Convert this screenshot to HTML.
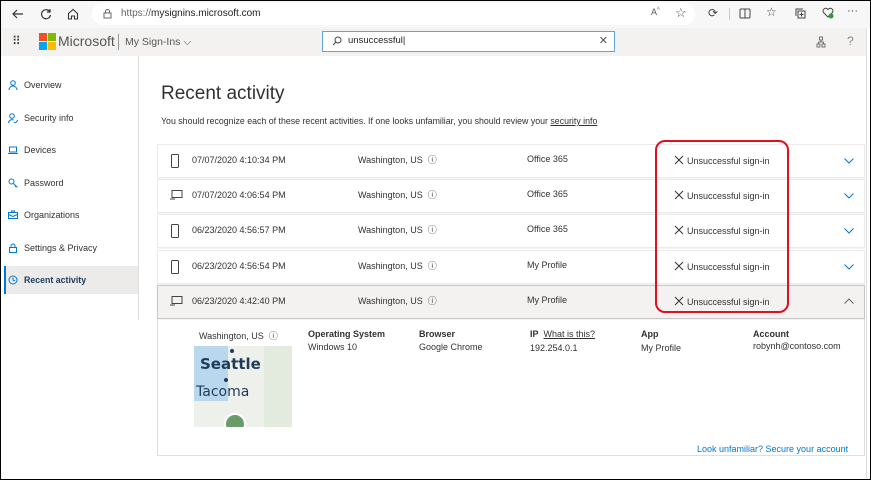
<!DOCTYPE html>
<html><head><meta charset="utf-8"><style>
*{box-sizing:border-box;margin:0;padding:0}
body{width:871px;height:480px;overflow:hidden;font-family:"Liberation Sans",sans-serif;background:#fff;position:relative;color:#323130}
.frame{position:absolute;inset:0;border:1px solid #000;z-index:50;pointer-events:none}
.tb{position:absolute;left:0;top:0;width:871px;height:28px;background:#f7f7f7}
.addr{position:absolute;left:92px;top:3px;width:603px;height:22px;border-radius:11px;background:#fff;font-size:10px;line-height:22px;padding-left:29px;color:#666}
.addr b{font-weight:normal;color:#222}
.hdr{position:absolute;left:0;top:28px;width:866px;height:28px;background:#f3f2f1}
.side{position:absolute;left:0;top:56px;width:139px;height:264px;border-right:1px solid #e1dfdd}
.nav{position:absolute;left:8px;font-size:9px;color:#323130;display:flex;align-items:center;gap:6px}
.nav svg{width:10px;height:10px}
.sel{position:absolute;left:4px;top:266px;width:134px;height:28px;background:#edebe9;border-left:2px solid #0078d4}
.row{position:absolute;left:157px;width:708px;height:34px;border:1px solid #edebe9;font-size:9px;line-height:11px;color:#323130;box-shadow:0 1px 1px rgba(0,0,0,.05)}
.row>span{position:absolute;top:10px}
.row .i{position:absolute;left:12px;top:9px}
.row .x{display:inline-block;width:10px;height:10px;vertical-align:-1px;margin-right:3px}
.ex{position:absolute;left:157px;top:319px;width:708px;height:137px;border:1px solid #e1dfdd;border-top:none;font-size:9px}
.ex div{position:absolute}
</style></head><body>
<div class="tb">
<svg style="position:absolute;left:12px;top:8px" width="12" height="12" viewBox="0 0 12 12" fill="none" stroke="#333" stroke-width="1.2"><path d="M11 6H1M5 2L1 6l4 4"/></svg>
<svg style="position:absolute;left:40px;top:8px" width="12" height="12" viewBox="0 0 12 12" fill="none" stroke="#333" stroke-width="1.2"><path d="M10 4A4.5 4.5 0 1 0 10.5 7M10 1v3H7"/></svg>
<svg style="position:absolute;left:67px;top:8px" width="12" height="12" viewBox="0 0 12 12" fill="none" stroke="#333" stroke-width="1.1"><path d="M1.5 5.5L6 1.5l4.5 4V11h-3V8h-3v3h-3z"/></svg>
<div class="addr">https://<b>mysignins.microsoft.com</b></div>
<svg style="position:absolute;left:103px;top:9px" width="9" height="10" viewBox="0 0 9 10" fill="none" stroke="#666"><rect x="1" y="4" width="7" height="5"/><path d="M2.5 4V2.5a2 2 0 0 1 4 0V4"/></svg>
<span style="position:absolute;left:651px;top:7px;font-size:9px;color:#555">A<sup style="font-size:6px">ᴬ</sup></span>
<span style="position:absolute;left:675px;top:5px;font-size:13px;color:#555">☆</span>
<span style="position:absolute;left:708px;top:6px;font-size:12px;color:#444">⟳</span>
<div style="position:absolute;left:729px;top:8px;width:1px;height:12px;background:#ccc"></div>
<svg style="position:absolute;left:739px;top:8px" width="12" height="11" viewBox="0 0 12 11" fill="none" stroke="#444"><rect x="1" y="1" width="10" height="9" rx="1"/><path d="M6 1v9"/></svg>
<span style="position:absolute;left:766px;top:5px;font-size:12px;color:#444">☆</span>
<svg style="position:absolute;left:795px;top:8px" width="11" height="11" viewBox="0 0 11 11" fill="none" stroke="#444"><rect x="3" y="3" width="7" height="7"/><path d="M1 8V1h7M6.5 4.5v4M4.5 6.5h4"/></svg>
<svg style="position:absolute;left:822px;top:7px" width="12" height="12" viewBox="0 0 12 12"><path d="M6 10L1.5 5.5a2.5 2.5 0 0 1 4.5-3 2.5 2.5 0 0 1 4.5 3z" fill="none" stroke="#444"/><circle cx="9" cy="9" r="2.5" fill="#2a9d3a"/></svg>
<span style="position:absolute;left:847px;top:5px;font-size:11px;color:#444">···</span>
</div>
<div class="hdr">
<span style="position:absolute;left:12px;top:6px;font-size:12px;color:#333;letter-spacing:-1px">⠿</span>
<svg style="position:absolute;left:39px;top:5px" width="17" height="17"><rect width="8" height="8" fill="#f25022"/><rect x="9" width="8" height="8" fill="#7fba00"/><rect y="9" width="8" height="8" fill="#00a4ef"/><rect x="9" y="9" width="8" height="8" fill="#ffb900"/></svg>
<span style="position:absolute;left:58px;top:5px;font-size:14px;color:#555">Microsoft</span>
<div style="position:absolute;left:118px;top:6px;width:1px;height:16px;background:#999"></div>
<span style="position:absolute;left:125px;top:8px;font-size:10.5px;color:#555">My Sign-Ins ⌵</span>
<div style="position:absolute;left:322px;top:3px;width:293px;height:21px;border:1.5px solid #5ea5e0;background:#fff;font-size:9.5px;line-height:18px;padding-left:25px;color:#222">unsuccessful|
<svg style="position:absolute;left:9px;top:4px" width="10" height="10" viewBox="0 0 10 10" fill="none" stroke="#444"><circle cx="6" cy="4" r="3"/><path d="M4 6L1 9"/></svg>
<span style="position:absolute;right:6px;top:0;color:#555;font-size:11px">✕</span></div>
<svg style="position:absolute;left:816px;top:8px" width="10" height="12" viewBox="0 0 10 12" fill="none" stroke="#555" stroke-width=".8"><rect x="3.5" y="1" width="3" height="3"/><rect x="1" y="8" width="3" height="3"/><rect x="6" y="8" width="3" height="3"/><path d="M5 4v2M2.5 8V6h5v2"/></svg>
<span style="position:absolute;left:847px;top:6px;font-size:12px;color:#888">?</span>
</div>
<div class="side"></div>
<div class="sel"></div>
<div class="nav" style="top:80px"><svg viewBox="0 0 10 10" fill="none" stroke="#0078d4"><circle cx="5" cy="3" r="2.3"/><path d="M1 10a4 4 0 0 1 8 0"/></svg>Overview</div>
<div class="nav" style="top:113px"><svg viewBox="0 0 10 10" fill="none" stroke="#0078d4"><circle cx="4" cy="3" r="2.3"/><path d="M0.5 10a3.5 3.5 0 0 1 5-3M6 9l1.5 1 2.5-3"/></svg>Security info</div>
<div class="nav" style="top:145px"><svg viewBox="0 0 10 10" fill="none" stroke="#0078d4"><rect x="1.5" y="2" width="7" height="5"/><path d="M0 8.5h10"/></svg>Devices</div>
<div class="nav" style="top:178px"><svg viewBox="0 0 10 10" fill="none" stroke="#0078d4"><circle cx="3.5" cy="3.5" r="2.5"/><path d="M5.5 5.5L9.5 9.5M8 8l-1 1"/></svg>Password</div>
<div class="nav" style="top:210px"><svg viewBox="0 0 10 10" fill="none" stroke="#0078d4"><rect x=".5" y="2.5" width="9" height="6"/><path d="M3.5 2.5v-1.5h3v1.5M.5 4.5l4.5 2 4.5-2"/></svg>Organizations</div>
<div class="nav" style="top:243px"><svg viewBox="0 0 10 10" fill="none" stroke="#0078d4"><rect x="1.5" y="4.5" width="7" height="5"/><path d="M3 4.5V3a2 2 0 0 1 4 0v1.5"/></svg>Settings &amp; Privacy</div>
<div class="nav" style="top:275px;color:#1b3a5c;font-weight:bold;font-size:8.8px"><svg viewBox="0 0 10 10" fill="none" stroke="#0078d4"><circle cx="5" cy="5" r="4"/><path d="M5 2.5V5l2 1"/></svg>Recent activity</div>

<div style="position:absolute;left:161px;top:83px;font-size:19px;color:#323130">Recent activity</div>
<div style="position:absolute;left:161px;top:116px;font-size:8.8px;color:#323130">You should recognize each of these recent activities. If one looks unfamiliar, you should review your <u>security info</u></div>

<div class="row" style="top:144px"><svg class="i" width="10" height="14" viewBox="0 0 10 14" fill="none" stroke="#444"><rect x="1.5" y=".5" width="7" height="13" rx="1"/></svg><span style="left:34px">07/07/2020 4:10:34 PM</span><span style="left:200px">Washington, US &nbsp;ⓘ</span><span style="left:369px;top:9px">Office 365</span><span style="left:516px"><svg class="x" viewBox="0 0 10 10" stroke="#333"><path d="M1 1l8 8M9 1l-8 8"/></svg>Unsuccessful sign-in</span><svg style="position:absolute;left:686px;top:13px" width="10" height="6" viewBox="0 0 10 6" fill="none" stroke="#0078d4"><path d="M.5.5L5 5 9.5.5"/></svg></div>
<div class="row" style="top:179px"><svg class="i" width="13" height="12" viewBox="0 0 13 12" fill="none" stroke="#444"><rect x="2" y="1.5" width="10" height="7"/><path d="M0 10h5"/></svg><span style="left:34px">07/07/2020 4:06:54 PM</span><span style="left:200px">Washington, US &nbsp;ⓘ</span><span style="left:369px;top:9px">Office 365</span><span style="left:516px"><svg class="x" viewBox="0 0 10 10" stroke="#333"><path d="M1 1l8 8M9 1l-8 8"/></svg>Unsuccessful sign-in</span><svg style="position:absolute;left:686px;top:13px" width="10" height="6" viewBox="0 0 10 6" fill="none" stroke="#0078d4"><path d="M.5.5L5 5 9.5.5"/></svg></div>
<div class="row" style="top:214px"><svg class="i" width="10" height="14" viewBox="0 0 10 14" fill="none" stroke="#444"><rect x="1.5" y=".5" width="7" height="13" rx="1"/></svg><span style="left:34px">06/23/2020 4:56:57 PM</span><span style="left:200px">Washington, US &nbsp;ⓘ</span><span style="left:369px;top:9px">Office 365</span><span style="left:516px"><svg class="x" viewBox="0 0 10 10" stroke="#333"><path d="M1 1l8 8M9 1l-8 8"/></svg>Unsuccessful sign-in</span><svg style="position:absolute;left:686px;top:13px" width="10" height="6" viewBox="0 0 10 6" fill="none" stroke="#0078d4"><path d="M.5.5L5 5 9.5.5"/></svg></div>
<div class="row" style="top:250px"><svg class="i" width="10" height="14" viewBox="0 0 10 14" fill="none" stroke="#444"><rect x="1.5" y=".5" width="7" height="13" rx="1"/></svg><span style="left:34px">06/23/2020 4:56:54 PM</span><span style="left:200px">Washington, US &nbsp;ⓘ</span><span style="left:369px;top:9px">My Profile</span><span style="left:516px"><svg class="x" viewBox="0 0 10 10" stroke="#333"><path d="M1 1l8 8M9 1l-8 8"/></svg>Unsuccessful sign-in</span><svg style="position:absolute;left:686px;top:13px" width="10" height="6" viewBox="0 0 10 6" fill="none" stroke="#0078d4"><path d="M.5.5L5 5 9.5.5"/></svg></div>
<div class="row" style="top:285px;background:#f3f2f1;border-color:#c8c6c4"><svg class="i" width="13" height="12" viewBox="0 0 13 12" fill="none" stroke="#444"><rect x="2" y="1.5" width="10" height="7"/><path d="M0 10h5"/></svg><span style="left:34px">06/23/2020 4:42:40 PM</span><span style="left:200px">Washington, US &nbsp;ⓘ</span><span style="left:369px;top:9px">My Profile</span><span style="left:516px"><svg class="x" viewBox="0 0 10 10" stroke="#333"><path d="M1 1l8 8M9 1l-8 8"/></svg>Unsuccessful sign-in</span><svg style="position:absolute;left:686px;top:12px" width="10" height="6" viewBox="0 0 10 6" fill="none" stroke="#666"><path d="M.5 5.5L5 1l4.5 4.5"/></svg></div>
<div class="ex">
<div style="left:41px;top:10px">Washington, US &nbsp;ⓘ</div>
<div style="left:36px;top:27px;width:98px;height:81px;background:#eef0ec;overflow:hidden">
<div style="position:absolute;left:0;top:0;width:34px;height:55px;background:#b9d8ee"></div>
<div style="position:absolute;left:70px;top:0;width:28px;height:81px;background:#e2ebde"></div>
<div style="position:absolute;left:36px;top:3px;width:4px;height:4px;border-radius:2px;background:#1f3b5a"></div>
<div style="position:absolute;left:30px;top:32px;width:4px;height:4px;border-radius:2px;background:#1f3b5a"></div>
<div style="position:absolute;left:6px;top:9px;font-size:15px;font-weight:bold;color:#1f3b5a;font-family:'DejaVu Sans',sans-serif">Seattle</div>
<div style="position:absolute;left:2px;top:38px;font-size:14px;color:#1f3b5a;font-family:'DejaVu Sans',sans-serif">Tacoma</div>
<div style="position:absolute;left:30px;top:67px;width:22px;height:22px;border-radius:11px;background:#6a9c6a;border:2px solid #fff"></div>
</div>
<div style="left:150px;top:10px;font-weight:bold">Operating System</div><div style="left:150px;top:23px">Windows 10</div>
<div style="left:261px;top:10px;font-weight:bold">Browser</div><div style="left:261px;top:23px">Google Chrome</div>
<div style="left:372px;top:10px"><b>IP</b> &nbsp;<u>What is this?</u></div><div style="left:372px;top:24px">192.254.0.1</div>
<div style="left:483px;top:10px;font-weight:bold">App</div><div style="left:483px;top:24px">My Profile</div>
<div style="left:595px;top:10px;font-weight:bold">Account</div><div style="left:595px;top:22px">robynh@contoso.com</div>
<div style="left:539px;top:125px;color:#0078d4">Look unfamiliar? Secure your account</div>
</div>
<div style="position:absolute;left:655px;top:140px;width:134px;height:173px;border:2.5px solid #e0101f;border-radius:10px"></div>
<div style="position:absolute;left:866px;top:28px;width:1px;height:450px;background:#ddd"></div>
<div class="frame"></div>
</body></html>
